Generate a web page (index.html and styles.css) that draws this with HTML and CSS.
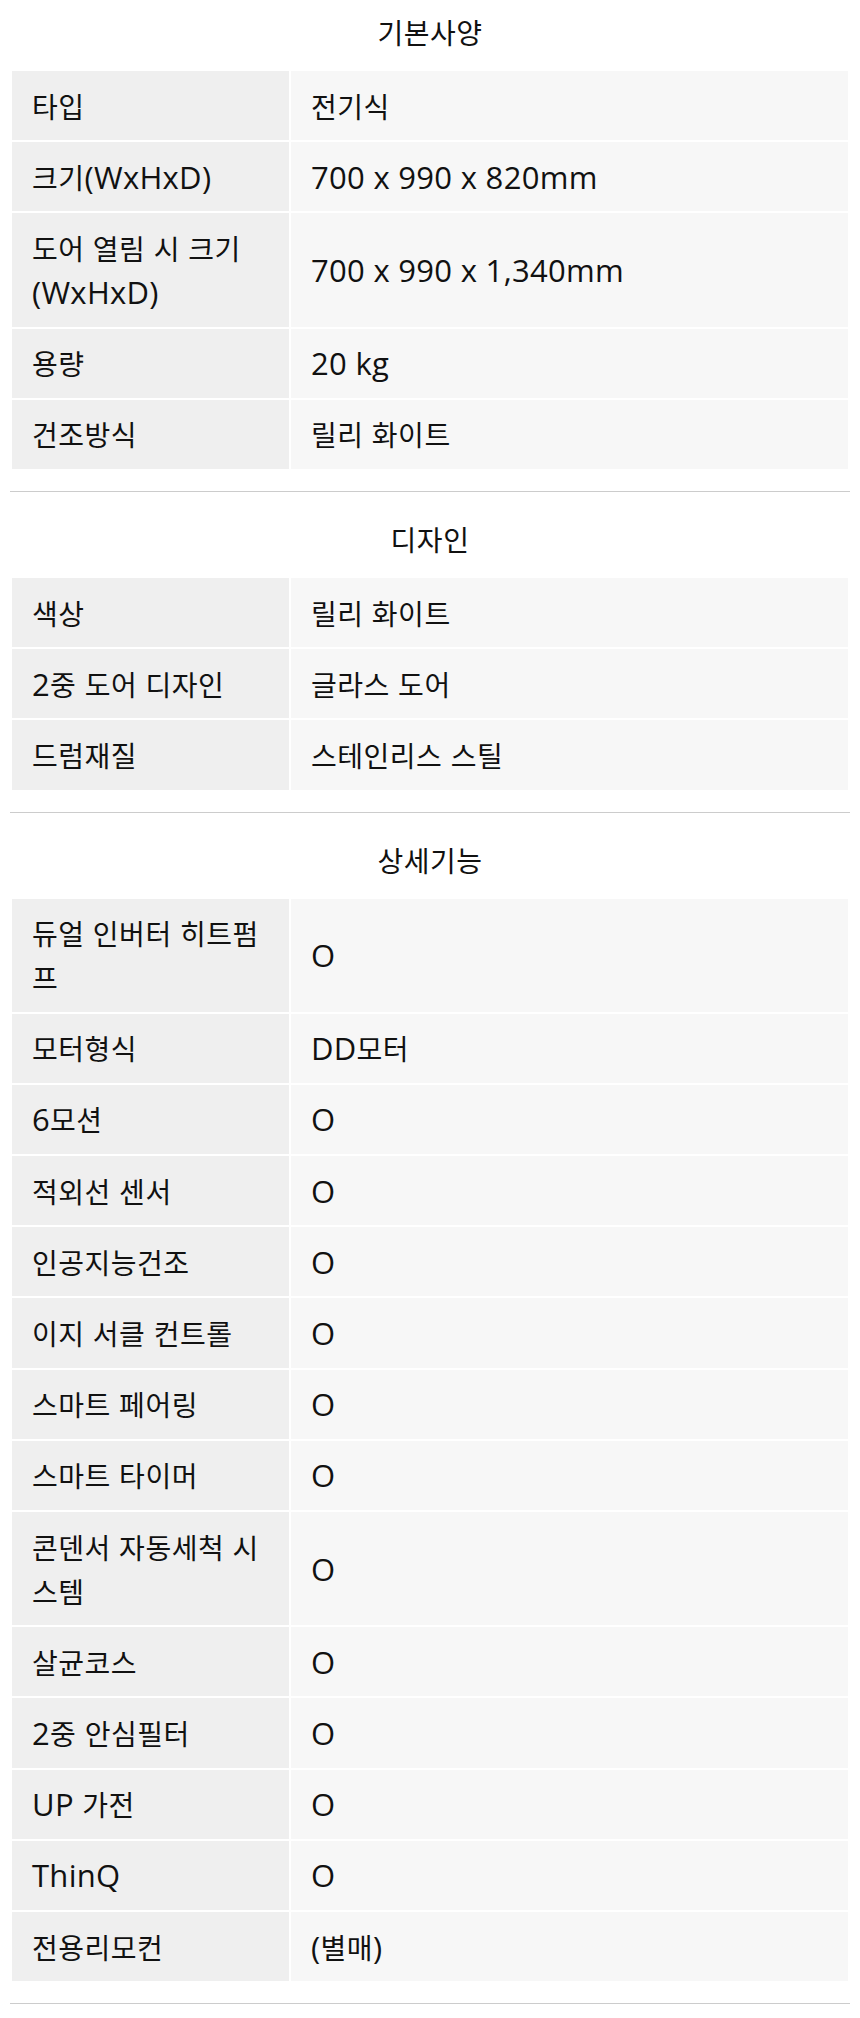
FILE: index.html
```html
<!DOCTYPE html>
<html lang="ko">
<head>
<meta charset="utf-8">
<title>제품 사양</title>
<link rel="stylesheet" href="styles.css">
</head>
<body>
<div class="specs">
  <section class="spec-section">
    <h3 class="spec-title">기본사양</h3>
    <table class="spec-table">
      <tbody>
        <tr><th>타입</th><td>전기식</td></tr>
        <tr><th>크기<span class="en">(WxHxD)</span></th><td><span class="en">700 x 990 x 820mm</span></td></tr>
        <tr><th>도어 열림 시 크기 <span class="en">(WxHxD)</span></th><td><span class="en">700 x 990 x 1,340mm</span></td></tr>
        <tr><th>용량</th><td><span class="en">20 kg</span></td></tr>
        <tr><th>건조방식</th><td>릴리 화이트</td></tr>
      </tbody>
    </table>
  </section>
  <hr class="divider">
  <section class="spec-section">
    <h3 class="spec-title">디자인</h3>
    <table class="spec-table">
      <tbody>
        <tr><th>색상</th><td>릴리 화이트</td></tr>
        <tr><th><span class="en">2</span>중 도어 디자인</th><td>글라스 도어</td></tr>
        <tr><th>드럼재질</th><td>스테인리스 스틸</td></tr>
      </tbody>
    </table>
  </section>
  <hr class="divider">
  <section class="spec-section">
    <h3 class="spec-title">상세기능</h3>
    <table class="spec-table">
      <tbody>
        <tr><th>듀얼 인버터 히트펌프</th><td><span class="en">O</span></td></tr>
        <tr><th>모터형식</th><td><span class="en">DD</span>모터</td></tr>
        <tr><th><span class="en">6</span>모션</th><td><span class="en">O</span></td></tr>
        <tr><th>적외선 센서</th><td><span class="en">O</span></td></tr>
        <tr><th>인공지능건조</th><td><span class="en">O</span></td></tr>
        <tr><th>이지 서클 컨트롤</th><td><span class="en">O</span></td></tr>
        <tr><th>스마트 페어링</th><td><span class="en">O</span></td></tr>
        <tr><th>스마트 타이머</th><td><span class="en">O</span></td></tr>
        <tr><th>콘덴서 자동세척 시스템</th><td><span class="en">O</span></td></tr>
        <tr><th>살균코스</th><td><span class="en">O</span></td></tr>
        <tr><th><span class="en">2</span>중 안심필터</th><td><span class="en">O</span></td></tr>
        <tr><th><span class="en">UP</span> 가전</th><td><span class="en">O</span></td></tr>
        <tr><th><span class="en">ThinQ</span></th><td><span class="en">O</span></td></tr>
        <tr><th>전용리모컨</th><td><span class="en">(</span>별매<span class="en">)</span></td></tr>
      </tbody>
    </table>
  </section>
  <hr class="divider">
</div>
</body>
</html>
```

FILE: styles.css
```css
html, body {
  margin: 0;
  padding: 0;
  background: #ffffff;
}

body {
  font-family: "Noto Sans CJK KR", "Noto Sans", sans-serif;
  color: #111111;
}

.specs {
  padding: 10px 10px 0;
}

.spec-section {
  margin: 0;
}

.spec-title {
  margin: 0 0 15px;
  font-size: 28px;
  font-weight: 400;
  letter-spacing: 0.5px;
  line-height: 44px;
  text-align: center;
}

.spec-table {
  width: 100%;
  border-collapse: separate;
  border-spacing: 2px;
  table-layout: fixed;
  margin: 0 0 20px;
}

.spec-table th,
.spec-table td {
  padding: 12.6px 10px 12.6px 20px;
  font-size: 28px;
  font-weight: 400;
  letter-spacing: 0.5px;
  line-height: 44px;
  text-align: left;
  vertical-align: middle;
}

.spec-table th {
  width: 277px;
  background: #efefef;
  box-sizing: border-box;
}

.spec-table td {
  background: #f7f7f7;
}

.en {
  font-family: "Open Sans", "Noto Sans", sans-serif;
  font-size: 31px;
  line-height: 30px;
  letter-spacing: 0.3px;
}

.divider {
  height: 0;
  margin: 0 0 25px;
  border: 0;
  border-top: 1px solid #cccccc;
}
```
